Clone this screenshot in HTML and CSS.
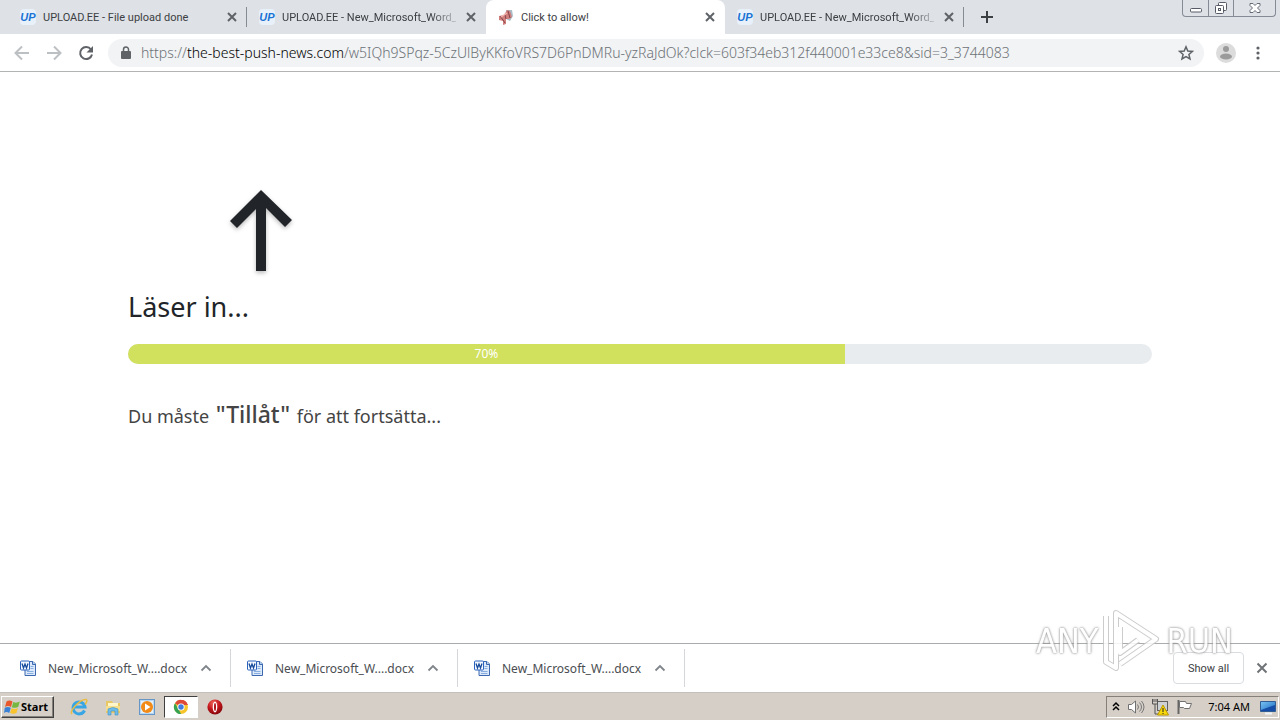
FILE: index.html
```html
<!DOCTYPE html>
<html lang="sv">
<head>
<meta charset="utf-8">
<title>Click to allow!</title>
<link rel="stylesheet" href="styles.css">
</head>
<body>
<svg class="defs" aria-hidden="true">
  <defs>
    <linearGradient id="sky" x1="0" y1="0" x2="1" y2="1"><stop offset="0" stop-color="#7cc4f4"/><stop offset="1" stop-color="#1668c0"/></linearGradient>
    <radialGradient id="ruby" cx=".4" cy=".25" r=".8"><stop offset="0" stop-color="#f06a5c"/><stop offset=".5" stop-color="#c4161c"/><stop offset="1" stop-color="#7c0508"/></radialGradient>
  </defs>
  <symbol id="close" viewBox="0 0 16 16"><path d="M4 4l8 8M12 4l-8 8" fill="none" stroke="currentColor" stroke-width="2"/></symbol>
  <symbol id="chevron" viewBox="0 0 16 16"><path d="M3.500 10.500L8 6l4.500 4.500" fill="none" stroke="#80858a" stroke-width="1.800"/></symbol>
  <symbol id="word" viewBox="0 0 16 16">
    <path d="M6 1.500h7l2.500 2.500v11.500H5V3z" fill="#dce9fa" stroke="#3c68b0"/>
    <path d="M12.500 1.500v3h3" fill="#b4cff2" stroke="#3c68b0"/>
    <path d="M10.500 6.500h3M10.500 8.500h3M7 11.500h6.500M7 13.500h6.500" stroke="#88aee0"/>
    <rect x=".5" y="1" width="9" height="9" rx="1" fill="#f6faff" stroke="#2b62bd"/>
    <path d="M2 3.500l1.500 4.500L5 4l1.500 4L8 3.500" fill="none" stroke="#174a9c" stroke-width="1.300"/>
  </symbol>
</svg>

<header class="tabstrip">
  <nav class="tabs" aria-label="Tabs">
    <div class="tab divided"><span class="favicon up">UP</span><span class="tab-title">UPLOAD.EE - File upload done</span><button class="icon-button small" aria-label="Close tab"><svg><use href="#close"/></svg></button></div>
    <div class="tab"><span class="favicon up">UP</span><span class="tab-title long">UPLOAD.EE - New_Microsoft_Word_</span><button class="icon-button small" aria-label="Close tab"><svg><use href="#close"/></svg></button></div>
    <div class="tab active">
      <svg class="favicon" viewBox="0 0 16 16"><path d="M8 1h6l1 6-3 5-4-2z" fill="#a9bcc8"/><path d="M1 7l5-1 3-5 3 1 2 6-3 2-3 0v5l-3 1v-4l-4-1z" fill="#d07f7c"/><path d="M10 2l2 7M2 7l3 4M7 6l1 4M5 11l2 3" stroke="#84454b"/><path d="M3 8l6-4" stroke="#f1b4ac" stroke-width="1.500"/></svg>
      <span class="tab-title">Click to allow!</span><button class="icon-button small" aria-label="Close tab"><svg><use href="#close"/></svg></button>
    </div>
    <div class="tab divided"><span class="favicon up">UP</span><span class="tab-title long">UPLOAD.EE - New_Microsoft_Word_</span><button class="icon-button small" aria-label="Close tab"><svg><use href="#close"/></svg></button></div>
    <button class="icon-button new-tab" aria-label="New tab"><svg viewBox="0 0 16 16"><path d="M8 2v12M2 8h12" stroke="#3c4043" stroke-width="2"/></svg></button>
  </nav>
  <div class="window-controls">
    <button aria-label="Minimize"><svg viewBox="0 0 16 16"><rect x="2.500" y="8.500" width="11" height="3.500" rx="1" fill="#fff" stroke="#565b66"/></svg></button>
    <button aria-label="Restore"><svg viewBox="0 0 16 16"><rect x="5.500" y="2.500" width="8" height="8" rx="1" fill="#fff" stroke="#565b66"/><rect x="2.500" y="5.500" width="8" height="8" rx="1" fill="#fff" stroke="#565b66"/><rect x="5.500" y="8.500" width="2" height="2" fill="#fff" stroke="#565b66"/></svg></button>
    <button class="wide" aria-label="Close"><svg viewBox="0 0 16 16"><path d="M3 3.500h3l2 2 2-2h3v2L10.500 8l2.500 2.500v2h-3l-2-2-2 2H3v-2L5.500 8 3 5.500z" fill="#fff" stroke="#666b76"/></svg></button>
  </div>
</header>

<div class="toolbar">
  <button class="icon-button muted" aria-label="Back"><svg viewBox="0 0 16 16"><path d="M15 8H2M8 1.500L1.500 8 8 14.500" fill="none" stroke="currentColor" stroke-width="2"/></svg></button>
  <button class="icon-button muted" aria-label="Forward"><svg viewBox="0 0 16 16"><path d="M1 8h13M8 1.500L14.500 8 8 14.500" fill="none" stroke="currentColor" stroke-width="2"/></svg></button>
  <button class="icon-button" aria-label="Reload"><svg viewBox="0 0 16 16"><path d="M13 4.500A6 6 0 1 0 14 9.500" fill="none" stroke="currentColor" stroke-width="2"/><path d="M15 1v6.500H8.500z" fill="currentColor"/></svg></button>
  <div class="omnibox">
    <svg class="lock" viewBox="0 0 16 16"><rect x="3" y="6" width="10" height="8" rx="1" fill="#5f6368"/><path d="M5.500 6V4.500a2.500 2.500 0 0 1 5 0V6" fill="none" stroke="#5f6368" stroke-width="1.500"/></svg>
    <span class="url">https://<span class="host">the-best-push-news.com</span>/w5IQh9SPqz-5CzUlByKKfoVRS7D6PnDMRu-yzRaJdOk?clck=603f34eb312f440001e33ce8&amp;sid=3_3744083</span>
    <button class="icon-button" aria-label="Bookmark"><svg viewBox="0 0 16 16"><path d="M8 1.800l1.800 4.200 4.600.4-3.500 3 1.100 4.500L8 11.500l-4 2.400 1.100-4.500-3.500-3 4.600-.4z" fill="none" stroke="currentColor" stroke-width="1.500"/></svg></button>
  </div>
  <button class="icon-button avatar" aria-label="Profile"><svg viewBox="0 0 20 20"><circle cx="10" cy="10" r="10" fill="#dcdcdc"/><circle cx="10" cy="6" r="3" fill="#9b9b9b"/><ellipse cx="10" cy="13.500" rx="6" ry="3" fill="#9b9b9b"/></svg></button>
  <button class="icon-button" aria-label="Menu"><svg viewBox="0 0 16 16"><circle cx="8" cy="3" r="1.600" fill="currentColor"/><circle cx="8" cy="8" r="1.600" fill="currentColor"/><circle cx="8" cy="13" r="1.600" fill="currentColor"/></svg></button>
</div>

<main class="page">
  <svg class="arrow" viewBox="0 0 64 84" aria-hidden="true"><path d="M32 1L63 31l-7 7L37 19v63H27V20L8 39l-7-7z" fill="#212529"/></svg>
  <h1>Läser in...</h1>
  <div class="progress" role="progressbar" aria-label="Läser in" aria-valuenow="70" aria-valuemin="0" aria-valuemax="100"><div class="progress-bar" style="width:70%">70%</div></div>
  <p>Du måste <strong>"Tillåt"</strong> för att fortsätta...</p>
</main>

<section class="downloads" aria-label="Downloads">
  <div class="download"><svg class="file"><use href="#word"/></svg><span>New_Microsoft_W....docx</span><button class="icon-button small" aria-label="Options"><svg><use href="#chevron"/></svg></button></div>
  <div class="download"><svg class="file"><use href="#word"/></svg><span>New_Microsoft_W....docx</span><button class="icon-button small" aria-label="Options"><svg><use href="#chevron"/></svg></button></div>
  <div class="download"><svg class="file"><use href="#word"/></svg><span>New_Microsoft_W....docx</span><button class="icon-button small" aria-label="Options"><svg><use href="#chevron"/></svg></button></div>
  <button class="show-all">Show all</button>
  <button class="icon-button small" aria-label="Close downloads"><svg viewBox="0 0 16 16"><path d="M3.500 3.500l9 9M12.500 3.500l-9 9" stroke="#6f7377" stroke-width="2"/></svg></button>
</section>

<footer class="taskbar">
  <button class="start"><svg viewBox="0 0 16 16"><path d="M2.500 2.500q3-2 6 0L7 8Q4 6 1 8z" fill="#e8582c"/><path d="M9.300 3q3 1.500 6.500-.5L14.200 8q-3 1.500-6.400.3z" fill="#76b83f"/><path d="M.8 8.800q3-1.800 6 0L5.300 14q-3-2-5.300 0z" fill="#3b82d6"/><path d="M7.600 9.300q3 1.500 6.300-.3L12.400 14q-3 1.500-6.200 0z" fill="#f8c32c"/></svg>Start</button>
  <button class="task" aria-label="Internet Explorer"><svg viewBox="0 0 18 18"><path d="M14.500 12.500A6 6 0 1 1 15 9H4.500" fill="none" stroke="#38a5e4" stroke-width="3"/><path d="M2 16C-1 13 10 1 16 1.500c2 .5 0 4-1 5" fill="none" stroke="#e9bd43" stroke-width="1.500"/></svg></button>
  <button class="task" aria-label="Explorer"><svg viewBox="0 0 18 18"><path d="M2 3h6l1 2h7v10H2z" fill="#e8c765"/><path d="M4 5h10v5H4z" fill="#fff6c9"/><path d="M2 8h14v5H2z" fill="#f5de8d"/><path d="M4 17v-6q5-3 10 0v6h-3v-4H7v4z" fill="#6dbce9" stroke="#3e90c8" stroke-width=".6"/></svg></button>
  <button class="task" aria-label="Media Player"><svg viewBox="0 0 18 18"><rect x="1.500" y="1.500" width="15" height="15" fill="#b7d8f2" stroke="#6795c5"/><path d="M3 3h12v12H3z" fill="#e4f1fb"/><circle cx="9" cy="9" r="6" fill="#f28a18"/><path d="M7 5.500L12.500 9 7 12.500z" fill="#fff"/></svg></button>
  <button class="task running" aria-label="Chrome"><svg viewBox="0 0 18 18"><circle cx="9" cy="9" r="7" fill="#f5c52b"/><path d="M9 9L3 5.200A7 7 0 0 1 15.700 7H9z" fill="#dd4a38"/><path d="M3 5.200L7 12l2 4A7 7 0 0 1 3 5.200z" fill="#37a352"/><path d="M9 2v5h6.700A7 7 0 0 0 9 2z" fill="#dd4a38"/><circle cx="9" cy="9" r="3.600" fill="#fff"/><circle cx="9" cy="9" r="2.700" fill="#3f7ee0"/></svg></button>
  <button class="task" aria-label="Opera"><svg viewBox="0 0 18 18"><circle cx="9" cy="9" r="7.600" fill="url(#ruby)"/><ellipse cx="9" cy="9" rx="2.300" ry="5.400" fill="#fff"/><ellipse cx="9" cy="9" rx="1" ry="4" fill="#ad1216"/></svg></button>
  <div class="tray">
    <svg class="tray-more" viewBox="0 0 8 16"><path d="M1 7l3-3 3 3M1 11l3-3 3 3" fill="none" stroke="#000" stroke-width="1.500"/></svg>
    <svg viewBox="0 0 18 18"><path d="M1.500 6.500h3L8.500 3v12l-4-3.500h-3z" fill="#fff" stroke="#707070"/><path d="M10.500 6.500q2 2.500 0 5M12.500 4.500q4 4.500 0 9M14.500 3q5 6 0 12" fill="none" stroke="#777"/></svg>
    <svg viewBox="0 0 18 18"><rect x="6.500" y="3.500" width="10" height="9" fill="#cfd2d4" stroke="#606060"/><path d="M1.500 1v5h5V1M4 6v10h4M3 1v3M5 1v3" fill="none" stroke="#555"/><path d="M12 7l5.500 10h-11z" fill="#f7d80b" stroke="#bc9800"/><path d="M12 10v4M12 15v1" stroke="#222"/></svg>
    <svg viewBox="0 0 18 18"><path d="M3.500 2v14" stroke="#666" stroke-width="2"/><path d="M4.500 3.500h6l1 2h5l-2 5h-5l-1-1h-4z" fill="#fff" stroke="#707070"/></svg>
    <time>7:04 AM</time>
    <svg viewBox="0 0 18 18"><path d="M1.500 3.500h15v10h-15z" fill="url(#sky)" stroke="#315d93"/><path d="M2 12l14-5v6H2z" fill="#164da6"/><path d="M6 15.500h7" stroke="#eef4f9" stroke-width="2"/></svg>
  </div>
</footer>

<div class="watermark"><span>ANY</span><svg viewBox="0 0 60 66"><g fill="none" stroke-linejoin="round"><path d="M4 8v46l10 6V5l40 26-36 25M18 19v26l18-13" stroke="#c4c4c4" stroke-width="6"/><path d="M4 8v46l10 6V5l40 26-36 25M18 19v26l18-13" stroke="#fff" stroke-width="4"/></g></svg><span>RUN</span></div>
</body>
</html>
```
FILE: styles.css
```css
* { box-sizing: border-box; }
body {
  margin: 0;
  min-height: 100vh;
  display: flex;
  flex-direction: column;
  background: #fff;
  color: #212529;
  font-family: "Noto Sans", "Open Sans", sans-serif;
  font-size: 12px;
}
button { font: inherit; color: inherit; padding: 0; border: 0; background: none; }
svg { display: block; }
.defs { position: absolute; width: 0; height: 0; }

.icon-button { flex: none; width: 16px; height: 16px; color: #5f6368; }
.icon-button svg { width: 100%; height: 100%; }

.tabstrip { display: flex; justify-content: space-between; height: 34px; background: #dee1e6; }
.tabs { display: flex; flex: 1; min-width: 0; align-items: center; padding-left: 8px; }
.tab {
  display: flex;
  flex: 0 1 239px;
  min-width: 0;
  height: 34px;
  align-items: center;
  gap: 7px;
  padding: 0 7px 0 12px;
  color: #3c4043;
  font-family: Roboto, "Noto Sans", sans-serif;
  font-size: 11px;
}
.tab.divided { background: linear-gradient(#868b92, #868b92) right center / 1px 20px no-repeat; }
.tab.active { background: #fff; border-radius: 8px 8px 0 0; }
.favicon { flex: none; width: 16px; height: 16px; }
.up { font: italic bold 11px/16px "Liberation Sans", sans-serif; color: #1a73d4; text-align: center; background: #e8f1fa; border-radius: 4px; }
.tab-title { flex: 1; overflow: hidden; white-space: nowrap; }
.tab-title.long { mask-image: linear-gradient(to right, #000 86%, #0003); }
.new-tab { margin-left: 15px; }
.window-controls {
  display: flex;
  height: 17px;
  margin-right: 4px;
  border: 1px solid #858a94;
  border-top: 0;
  border-radius: 0 0 4px 4px;
}
.window-controls button { display: flex; justify-content: center; width: 25px; }
.window-controls button + button { border-left: 1px solid #858a94; }
.window-controls .wide { width: 42px; }
.window-controls svg { width: 16px; height: 16px; }

.toolbar { display: flex; align-items: center; gap: 16px; height: 38px; padding: 0 14px; border-bottom: 1px solid #b2b4b4; }
.muted { color: #bdc0c3; }
.omnibox {
  display: flex;
  flex: 1;
  min-width: 0;
  align-items: center;
  gap: 7px;
  height: 28px;
  margin-left: -2px;
  padding: 0 10px;
  border-radius: 14px;
  background: #f1f3f4;
}
.lock { flex: none; width: 16px; height: 16px; }
.url { flex: 1; overflow: hidden; white-space: nowrap; color: #6c7176; font-size: 14px; line-height: 20px; font-weight: 300; }
.host { color: #000; }
.avatar { width: 20px; height: 20px; margin: 0 -2px 0 -4px; }

.page { flex: 1; padding: 117px 10% 0; }
.arrow { width: 64px; height: 84px; margin-left: 101px; filter: drop-shadow(0 2px 2px #0004); }
h1 { margin: 16px 0 19px; font-size: 27px; line-height: 36px; font-weight: 400; }
.progress { height: 20px; overflow: hidden; border-radius: 10px; background: #e9ecef; }
.progress-bar { height: 100%; background: #d1e05d; color: #fff; font-size: 12px; line-height: 20px; text-align: center; }
.page p { margin: 32px 0; color: #444; font-size: 18px; line-height: 36px; }
.page strong { margin: 0 2px; font-size: 23px; font-weight: 500; }

.downloads { display: flex; align-items: center; height: 50px; padding-right: 10px; border-top: 1px solid #a9abac; border-bottom: 1px solid #c2c0bc; }
.download { display: flex; align-items: center; height: 38px; width: 227px; padding: 0 16px; border-right: 1px solid #d5d7da; color: #4a4d51; font-size: 12px; }
.download:first-child { width: 231px; padding-left: 20px; }
.download span { flex: 1; padding-left: 12px; white-space: nowrap; }
.file { flex: none; width: 16px; height: 16px; }
.show-all { width: 71px; height: 32px; margin: 0 10px 0 auto; border: 1px solid #dadce0; border-radius: 4px; background: #fff; color: #3c4043; font-family: Roboto, sans-serif; font-size: 11px; }

.taskbar { display: flex; align-items: center; height: 27px; padding: 0 1px; background: #d5cfc7; color: #000; font-size: 11px; }
.start {
  display: flex;
  align-items: center;
  gap: 1px;
  width: 53px;
  height: 22px;
  margin-right: 8px;
  padding-left: 2px;
  border: 1px solid;
  border-color: #fff #404040 #404040 #fff;
  box-shadow: inset -1px -1px #858079;
  font-weight: 700;
}
.start svg { width: 16px; height: 16px; }
.task { display: grid; place-items: center; width: 34px; height: 22px; }
.task svg { width: 18px; height: 18px; }
.running { border: 1px solid; border-color: #404040 #fff #fff #404040; background: #fff; }
.tray { display: flex; align-items: center; gap: 6px; height: 22px; margin-left: auto; padding: 0 1px 0 5px; border: 1px solid; border-color: #858079 #fff #fff #858079; }
.tray svg { width: 18px; height: 18px; }
.tray .tray-more { width: 8px; height: 16px; margin-right: 1px; }
.tray time { margin: 0 3px 0 9px; }

.watermark {
  position: absolute;
  right: 47px;
  bottom: 46px;
  display: flex;
  align-items: center;
  gap: 4px;
  color: #fff;
  font: 34px/66px "Liberation Sans Narrow", "DejaVu Sans Condensed", sans-serif;
  text-shadow: 0 0 2px #888, 0 0 3px #999;
  opacity: .85;
  pointer-events: none;
}
.watermark svg { width: 60px; height: 66px; }
```
